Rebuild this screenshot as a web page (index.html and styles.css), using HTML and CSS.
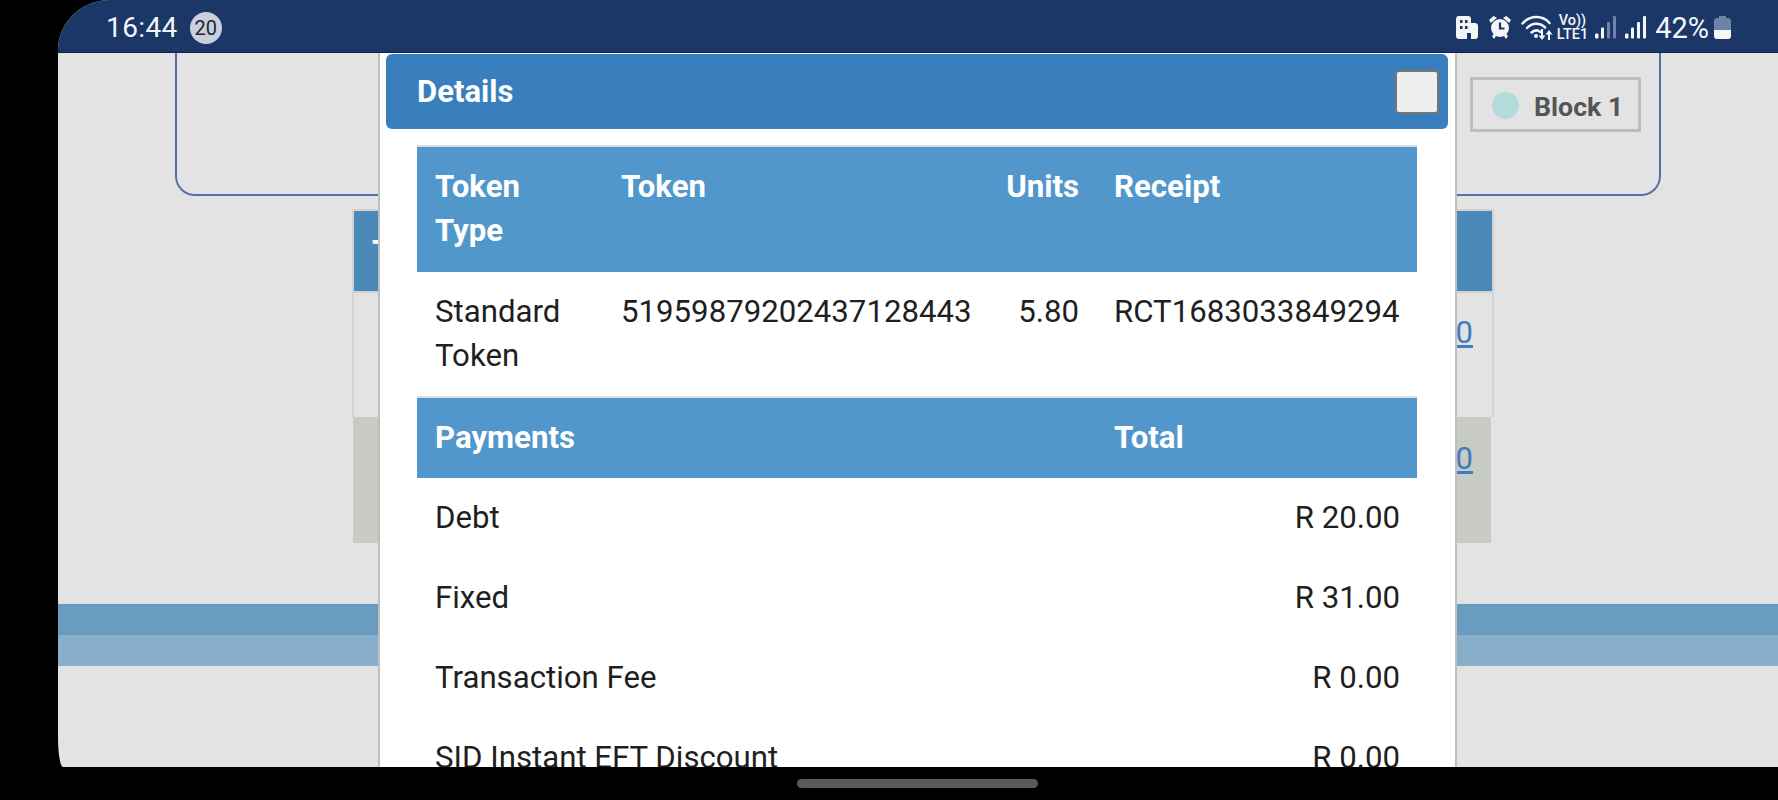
FILE: index.html
```html
<!DOCTYPE html>
<html lang="en">
<head>
<meta charset="utf-8">
<title>Details</title>
<link rel="stylesheet" href="styles.css">
</head>
<body>
<div class="screen">
  <header class="status">
    <span class="clock">16:44</span>
    <span class="badge">20</span>
    <span class="status-right">
      <svg class="ic-building" viewBox="0 0 22 23"><path fill="#f4f6fa" fill-rule="evenodd" d="M3 0h9a3 3 0 0 1 3 3v4h4a3 3 0 0 1 3 3v10a3 3 0 0 1-3 3h-4v-6h-4v6H3a3 3 0 0 1-3-3V3a3 3 0 0 1 3-3zM4 4v3h2.500V4zm5 0v3h2.500V4zM4 10v3h2.500v-3zm5 0v3h2.500v-3z"/></svg>
      <svg class="ic-alarm" viewBox="0 0 22 23"><path fill="#f4f6fa" d="M4.500 0l3.500 1.800L1.800 7 0 4zM17.500 0L14 1.800 20.200 7 22 4zM3 20.500l2.200-3.500 2.300 1.800L5.200 23zM19 20.500L16.800 17l-2.300 1.800 2.300 4.200z"/><circle cx="11" cy="12" r="9" fill="#f4f6fa"/><path fill="none" stroke="#1a3768" stroke-width="2.200" d="M11 6.500v6h4.500"/></svg>
      <svg class="ic-wifi" viewBox="0 0 32 25"><g fill="none" stroke="#f4f6fa" stroke-width="2.500" stroke-linecap="round"><path d="M1.500 8.500C9 0 21.500 0 28.500 8"/><path d="M6 13c5-5.500 13-5.500 18-.5"/><path d="M10.500 17.500c3-2.800 6-2.800 9-.5"/></g><circle cx="15" cy="21" r="2" fill="#f4f6fa"/><path fill="#f4f6fa" d="M20 14h2v6.500h2.500L21 25l-3.500-4.500H20zM28 15l3.500 4.500H29V25h-2v-5.500h-2.500z"/></svg>
      <span class="volte"><span>Vo))</span><span>LTE1</span></span>
      <svg class="ic-signal" viewBox="0 0 21 23"><g fill="#f4f6fa"><rect x="0" y="17.500" width="3.500" height="5" rx="1.200"/><rect x="6" y="11.500" width="3" height="11" rx="1"/></g><g fill="#6d83a8"><rect x="12" y="6" width="3" height="16.500" rx="1"/><rect x="18" y="0" width="3" height="22.500" rx="1"/></g></svg>
      <svg class="ic-signal" viewBox="0 0 21 23"><g fill="#f4f6fa"><rect x="0" y="17.500" width="3.500" height="5" rx="1.200"/><rect x="6" y="11.500" width="3" height="11" rx="1"/><rect x="12" y="6" width="3" height="16.500" rx="1"/><rect x="18" y="0" width="3" height="22.500" rx="1"/></g></svg>
      <span class="percent">42%</span>
      <svg class="ic-battery" viewBox="0 0 17 23"><path fill="#6d83a8" d="M5 0h7v2h2a3 3 0 0 1 3 3v9H0V5a3 3 0 0 1 3-3h2z"/><path fill="#f4f6fa" d="M0 14h17v6a3 3 0 0 1-3 3H3a3 3 0 0 1-3-3z"/></svg>
    </span>
  </header>

  <main class="page">
    <section class="card">
      <div class="legend"><span class="legend-dot"></span><span class="legend-label">Block 1</span></div>
    </section>
    <div class="back-table">
      <div class="back-head"><span class="back-head-text">T</span></div>
      <div class="back-row"><a class="back-link" href="#">0</a></div>
      <div class="back-row back-row-alt"><a class="back-link" href="#">0</a></div>
    </div>
    <div class="band band-dark"></div>
    <div class="band band-light"></div>
  </main>

  <aside class="modal">
    <div class="modal-header">
      <h4 class="modal-title">Details</h4>
      <span class="checkbox"></span>
    </div>
    <table class="details">
      <colgroup><col class="c1"><col class="c2"><col class="c3"><col class="c4"></colgroup>
      <thead>
        <tr><th>Token Type</th><th>Token</th><th class="num">Units</th><th>Receipt</th></tr>
      </thead>
      <tbody>
        <tr><td>Standard Token</td><td>51959879202437128443</td><td class="num">5.80</td><td>RCT1683033849294</td></tr>
      </tbody>
      <thead>
        <tr><th colspan="3">Payments</th><th>Total</th></tr>
      </thead>
      <tbody class="payments">
        <tr><td colspan="3">Debt</td><td class="num">R 20.00</td></tr>
        <tr><td colspan="3">Fixed</td><td class="num">R 31.00</td></tr>
        <tr><td colspan="3">Transaction Fee</td><td class="num">R 0.00</td></tr>
        <tr><td colspan="3">SID Instant EFT Discount</td><td class="num">R 0.00</td></tr>
      </tbody>
    </table>
  </aside>
</div>
<div class="nav-area"><span class="home-pill"></span></div>
</body>
</html>
```
FILE: styles.css
```css
* { box-sizing: border-box; }
html, body { margin: 0; height: 800px; background: #000; overflow: hidden; }
body { font-family: Roboto, "Liberation Sans", sans-serif; color: #1f1f1f; }

.screen {
  position: relative;
  margin-left: 58px;
  height: 767px;
  background: #e3e3e3;
  overflow: hidden;
  border-top-left-radius: 52px 50px;
  border-bottom-left-radius: 5px 30px;
}

.status {
  display: flex;
  align-items: center;
  height: 53px;
  padding: 3px 47px 0 48px;
  background: #1a3768;
  border-bottom: 1px solid #0e2253;
  color: #f4f6fa;
}
.clock { font-size: 28px; letter-spacing: 0.4px; }
.badge {
  display: flex;
  align-items: center;
  justify-content: center;
  width: 32px;
  height: 32px;
  margin-left: 12px;
  border-radius: 50%;
  background: #c9cfdd;
  color: #1f2530;
  font-size: 20px;
}
.status-right { display: flex; align-items: center; margin-left: auto; }
.ic-building, .ic-alarm { width: 22px; height: 23px; }
.ic-alarm { margin-left: 11px; }
.ic-wifi { width: 32px; height: 25px; margin-left: 10px; }
.volte {
  display: flex;
  flex-direction: column;
  align-items: center;
  margin-left: 4px;
  font-size: 14.500px;
  font-weight: 500;
  line-height: 14px;
}
.ic-signal { width: 21px; height: 23px; margin-left: 7px; }
.ic-signal + .ic-signal { margin-left: 9px; }
.percent { margin-left: 9px; font-size: 29px; }
.ic-battery { width: 17px; height: 23px; margin-left: 5px; }

.card {
  display: flex;
  justify-content: flex-end;
  align-items: flex-start;
  height: 143px;
  margin: 0 117px;
  padding: 24px 18px 0 0;
  border: 2px solid #5570a6;
  border-top: 0;
  border-radius: 0 0 20px 20px;
}
.legend {
  display: flex;
  align-items: center;
  width: 171px;
  height: 55px;
  padding: 2px 0 0 19px;
  border: 3px solid #bdbdbd;
}
.legend-dot { width: 27px; height: 27px; border-radius: 50%; background: #b5dcdc; }
.legend-label { margin: 3px 0 0 15px; font-size: 26.700px; font-weight: 700; color: #555; }

.back-table {
  width: 1142px;
  margin: 13px 0 0 294px;
}
.back-head {
  height: 84px;
  padding: 30px 0 0 18px;
  background: #4b8ab8;
  border: 2px solid #d2d2d2;
  color: #fff;
  font-size: 31px;
  font-weight: 700;
  line-height: 22px;
}
.back-row {
  height: 124px;
  padding: 18px 19px 0 0;
  border: solid #d2d2d2;
  border-width: 0 2px;
  font-size: 31px;
  line-height: 44px;
  text-align: right;
}
.back-row-alt { height: 126px; margin: 0 3px 0 1px; padding: 20px 18px 0 0; background: #c8cac4; border: 0; }
.back-link { color: #3f7dbf; }

.band { height: 31px; }
.band-dark { margin-top: 61px; background: #6a9cbf; box-shadow: 0 -1px 0 #d3dfe8; }
.band-light { background: #88afca; }

.modal {
  position: absolute;
  top: 53px;
  left: 320px;
  width: 1079px;
  height: 714px;
  padding: 1px 7px 0 6px;
  background: #fff;
  border: solid #bfbfbf;
  border-width: 0 2px;
}
.modal-header {
  display: flex;
  align-items: center;
  justify-content: space-between;
  height: 75px;
  padding: 0 9px 0 31px;
  background: #3a7fbd;
  border-radius: 6px;
  color: #fff;
}
.modal-title { margin: 0; font-size: 31px; font-weight: 700; }
.checkbox {
  width: 44px;
  height: 44px;
  background: #efefef;
  border: 2px solid #767676;
  border-radius: 4px;
}

.details {
  width: 1000px;
  margin: 16px 0 0 31px;
  border-collapse: collapse;
  table-layout: fixed;
  font-size: 31.200px;
  line-height: 44.300px;
  border-top: 2px solid #ddd;
}
.c1 { width: 186px; }
.c2 { width: 385px; }
.c3 { width: 108px; }
.c4 { width: 321px; }
.details th, .details td { padding: 18px; vertical-align: top; text-align: left; }
.details th { background: #5297cb; color: #fff; font-weight: 700; }
.details tbody + thead th { border-top: 2px solid #ddd; }
.details .num { text-align: right; }
.details th.num, .details td.num { padding-left: 0; padding-right: 17px; }
.details .payments td { padding-top: 17.850px; padding-bottom: 17.850px; }

.nav-area { display: flex; justify-content: center; align-items: center; height: 33px; padding-left: 56px; }
.home-pill { width: 241px; height: 9px; border-radius: 5px; background: #5a5a5a; }
```
